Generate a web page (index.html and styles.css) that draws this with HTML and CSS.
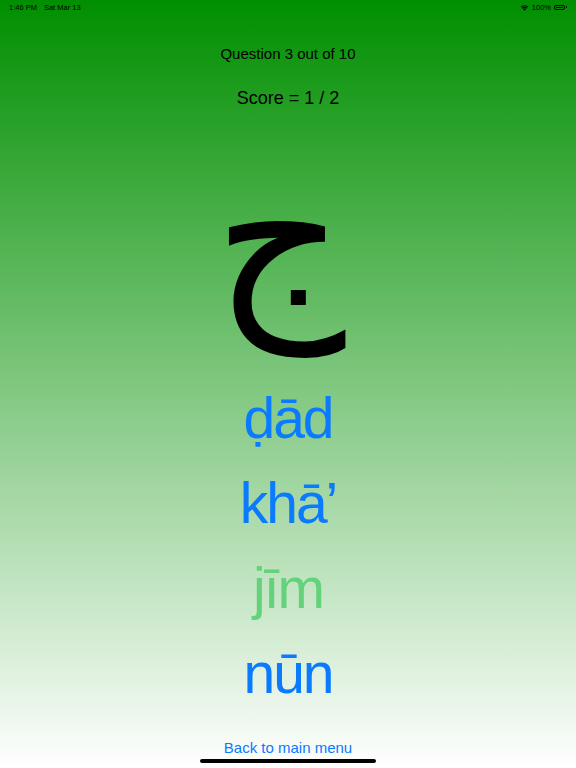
FILE: index.html
```html
<!DOCTYPE html>
<html>
<head>
<meta charset="utf-8">
<link rel="stylesheet" href="styles.css">
</head>
<body>
<div class="screen">
  <div class="status">
    <div class="status-left"><span>1:46 PM</span><span class="date">Sat Mar 13</span></div>
    <div class="status-right">
      <svg class="wifi" width="9" height="7" viewBox="0 0 18 14"><path d="M9 13.5 L6.2 10.6 A4 4 0 0 1 11.8 10.6 Z" fill="#000"/><path d="M3.8 8.2 A7.4 7.4 0 0 1 14.2 8.2 L12.7 9.7 A5.3 5.3 0 0 0 5.3 9.7 Z" fill="#000"/><path d="M1.3 5.6 A11 11 0 0 1 16.7 5.6 L15.2 7.1 A8.9 8.9 0 0 0 2.8 7.1 Z" fill="#000"/></svg>
      <span>100%</span>
      <span class="battery"><span class="battery-fill"></span></span><span class="battery-cap"></span>
    </div>
  </div>
  <div class="question">Question 3 out of 10</div>
  <div class="score">Score = 1 / 2</div>
  <div class="letter" lang="ar" dir="rtl">ج</div>
  <div class="options">
    <div class="option">ḍād</div>
    <div class="option">khā’</div>
    <div class="option correct">jīm</div>
    <div class="option">nūn</div>
  </div>
  <div class="back">Back to main menu</div>
  <div class="home-indicator"></div>
</div>
</body>
</html>
```

FILE: styles.css
```css
html, body {
  margin: 0;
  padding: 0;
}
body {
  width: 576px;
  height: 768px;
  overflow: hidden;
  font-family: "Liberation Sans", Arial, sans-serif;
}
.screen {
  position: relative;
  width: 576px;
  height: 768px;
  background: linear-gradient(to bottom, #008f00 0%, #ffffff 100%);
  display: flex;
  flex-direction: column;
  align-items: center;
}
.status {
  align-self: stretch;
  height: 14px;
  display: flex;
  justify-content: space-between;
  align-items: center;
  padding: 0 9px 0 9px;
  font-size: 7.5px;
  color: #000;
}
.status-left .date {
  margin-left: 7px;
}
.status-right {
  display: flex;
  align-items: center;
  gap: 2px;
}
.wifi {
  margin-right: 1px;
}
.battery {
  display: inline-block;
  width: 11px;
  height: 5px;
  border: 1px solid #000;
  border-radius: 2px;
  padding: 1px;
  box-sizing: border-box;
  margin-left: 1px;
}
.battery-fill {
  display: block;
  width: 100%;
  height: 100%;
  background: #000;
  border-radius: 1px;
}
.battery-cap {
  display: inline-block;
  width: 1px;
  height: 2px;
  background: #000;
  margin-left: -1px;
}
.question {
  margin-top: 31px;
  font-size: 15px;
  line-height: 18px;
  color: #000;
}
.score {
  margin-top: 24px;
  font-size: 18px;
  line-height: 22px;
  color: #000;
}
.letter {
  height: 267px;
  font-family: "DejaVu Sans", sans-serif;
  font-size: 205px;
  line-height: 257px;
  color: #000;
  margin-left: -17px;
}
.options {
  display: flex;
  flex-direction: column;
  align-items: center;
}
.option {
  font-size: 57px;
  line-height: 85px;
  letter-spacing: -2px;
  color: #0a7aff;
}
.option.correct {
  color: #63d27a;
}
.back {
  margin-top: 23px;
  font-size: 15px;
  line-height: 18px;
  color: #0a7aff;
}
.home-indicator {
  position: absolute;
  left: 200px;
  top: 759px;
  width: 176px;
  height: 4px;
  border-radius: 2px;
  background: #000;
}
```
